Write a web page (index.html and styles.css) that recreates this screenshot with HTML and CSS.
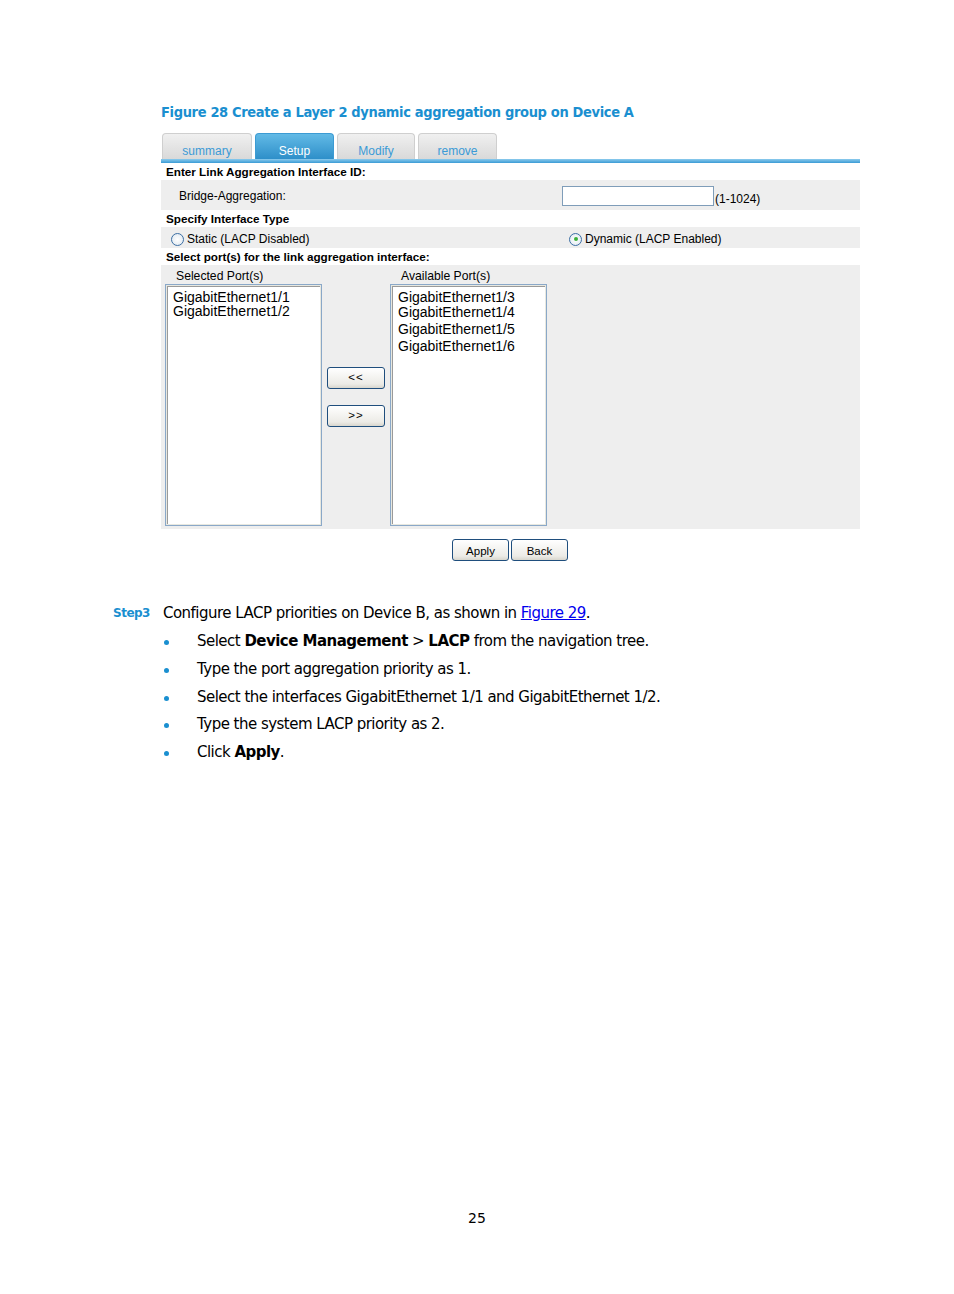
FILE: index.html
```html
<!DOCTYPE html>
<html>
<head>
<meta charset="utf-8">
<link rel="stylesheet" href="styles.css">
</head>
<body>
<div class="page">
  <div class="caption">Figure 28 Create a Layer 2 dynamic aggregation group on Device A</div>
  <div class="figure">
    <div class="tabs">
      <div class="tab t1">summary</div>
      <div class="tab active t2">Setup</div>
      <div class="tab t3">Modify</div>
      <div class="tab t4">remove</div>
    </div>
    <div class="tabbar"></div>
    <div class="row head">Enter Link Aggregation Interface ID:</div>
    <div class="row gray r2">
      <div class="lbl">Bridge-Aggregation:</div>
      <div class="right"><span class="input"></span><span class="hint">(1-1024)</span></div>
    </div>
    <div class="row head">Specify Interface Type</div>
    <div class="row gray r4">
      <div class="lbl2"><span class="radio"></span>Static (LACP Disabled)</div>
      <div class="right2"><span class="radio on"></span>Dynamic (LACP Enabled)</div>
    </div>
    <div class="row head">Select port(s) for the link aggregation interface:</div>
    <div class="panel">
      <div class="col">
        <div class="plabel">Selected Port(s)</div>
        <div class="list sel">
          <div>GigabitEthernet1/1</div>
          <div>GigabitEthernet1/2</div>
        </div>
      </div>
      <div class="mid">
        <div class="btn arrow">&lt;&lt;</div>
        <div class="btn arrow">&gt;&gt;</div>
      </div>
      <div class="col">
        <div class="plabel">Available Port(s)</div>
        <div class="list avail">
          <div>GigabitEthernet1/3</div>
          <div>GigabitEthernet1/4</div>
          <div>GigabitEthernet1/5</div>
          <div>GigabitEthernet1/6</div>
        </div>
      </div>
    </div>
    <div class="actions">
      <div class="btn act">Apply</div>
      <div class="btn act">Back</div>
    </div>
  </div>

  <div class="step">
    <div class="steplabel">Step3</div>
    <div class="steptext">Configure LACP priorities on Device B, as shown in <a class="link">Figure 29</a>.</div>
  </div>
  <ul class="bullets">
    <li>Select <b>Device Management</b> &gt; <b>LACP</b> from the navigation tree.</li>
    <li>Type the port aggregation priority as 1.</li>
    <li>Select the interfaces GigabitEthernet 1/1 and GigabitEthernet 1/2.</li>
    <li>Type the system LACP priority as 2.</li>
    <li>Click <b>Apply</b>.</li>
  </ul>
  <div class="pagenum">25</div>
</div>
</body>
</html>
```
FILE: styles.css
```css
html, body { margin: 0; padding: 0; background: #fff; }
.page { width: 954px; height: 1294px; position: relative; font-family: "DejaVu Sans", "Liberation Sans", sans-serif; color: #000; }
.caption { padding: 103px 0 0 161px; font-family: "DejaVu Sans Condensed", "DejaVu Sans", sans-serif; font-weight: bold; font-size: 14.5px; line-height: 18px; color: #1a8fd0; letter-spacing: -0.35px; }
.figure { margin: 12px 0 0 161px; width: 699px; font-family: "Liberation Sans", Arial, sans-serif; font-size: 12px; }
.tabs { display: flex; height: 26px; align-items: flex-end; padding-left: 1px; }
.tab { height: 26px; box-sizing: border-box; border: 1px solid #cfcfcf; border-bottom: none; border-radius: 4px 4px 0 0; background: linear-gradient(#f0f0f0, #d9d9d9); color: #3a9ad6; font-size: 12px; text-align: center; padding-top: 10px; margin-right: 3px; }
.t1 { width: 90px; }
.t2 { width: 79px; }
.t3 { width: 78px; }
.t4 { width: 79px; }
.tab.active { background: linear-gradient(#62bae6, #2e8fc9); border-color: #3c9bd3; color: #fff; }
.tabbar { height: 4px; background: linear-gradient(#8ccbed, #3a9bd5); }
.row { display: flex; align-items: center; }
.head { height: 17px; font-weight: bold; padding-left: 5px; font-size: 11.7px; }
.gray { background: #eeeeee; width: 699px; box-sizing: border-box; }
.r2 { height: 30px; }
.lbl { padding-left: 18px; width: 383px; padding-top: 1px; }
.right { display: flex; align-items: center; padding-top: 2px; }
.input { width: 152px; height: 20px; box-sizing: border-box; border: 1px solid #7f9db9; background: #fff; display: inline-block; }
.hint { margin-left: 1px; margin-top: 5px; }
.r4 { height: 21px; padding-top: 3px; }
.lbl2 { padding-left: 10px; width: 397px; display: flex; align-items: center; }
.right2 { display: flex; align-items: center; padding-left: 1px; }
.radio { width: 13px; height: 13px; border: 1px solid #3c6fa4; border-radius: 50%; background: radial-gradient(#fff, #dde6ee); margin-right: 3px; box-sizing: border-box; position: relative; }
.radio.on::after { content: ""; position: absolute; left: 3.5px; top: 3.5px; width: 4px; height: 4px; border-radius: 50%; background: #3ab03a; }
.panel { background: #eeeeee; height: 264px; display: flex; padding-left: 4px; box-sizing: border-box; }
.col { display: flex; flex-direction: column; }
.plabel { height: 19px; line-height: 15px; padding-top: 4px; box-sizing: border-box; padding-left: 11px; font-size: 12.2px; }
.list { width: 157px; height: 242px; box-sizing: border-box; border: 1px solid #8aa8c8; box-shadow: inset 0 0 0 1px #e8e8e0, inset 1px 1px 0 1px #9a9a9a; background: #fff; padding: 5px 0 0 7px; font-size: 14px; line-height: 15px; }
.sel div { line-height: 14px; }
.avail div:nth-child(n+3) { margin-top: 2px; }
.mid { width: 68px; display: flex; flex-direction: column; align-items: center; padding-top: 102px; gap: 16px; box-sizing: border-box; }
.btn { box-sizing: border-box; border: 1px solid #1f4e7d; border-radius: 3px; background: linear-gradient(#ffffff, #ecebe6 80%, #d8d6cd); text-align: center; font-size: 11.5px; }
.arrow { width: 58px; height: 22px; line-height: 19px; letter-spacing: 1px; }
.actions { display: flex; justify-content: flex-start; padding: 10px 0 0 291px; gap: 2px; }
.act { width: 57px; height: 22px; line-height: 22px; }
.step { display: flex; margin-top: 43px; font-family: "DejaVu Sans", sans-serif; font-size: 15px; line-height: 18px; }
.steplabel { width: 50px; padding-left: 113px; color: #1a8fd0; font-weight: bold; font-size: 12px; letter-spacing: -0.5px; }
.steptext { letter-spacing: -0.52px; }
.link { color: #0000ee; text-decoration: underline; }
.bullets { list-style: none; margin: 10px 0 0 0; padding: 0 0 0 197px; font-family: "DejaVu Sans", sans-serif; font-size: 15px; line-height: 18px; letter-spacing: -0.52px; }
.bullets li { position: relative; margin-bottom: 9.8px; }
.bullets li::before { content: ""; position: absolute; left: -33px; top: 8px; width: 5px; height: 5px; border-radius: 50%; background: #1a8fd0; }
.pagenum { position: absolute; top: 1210px; left: 0; width: 954px; text-align: center; font-family: "DejaVu Sans", sans-serif; font-size: 14px; }
```
